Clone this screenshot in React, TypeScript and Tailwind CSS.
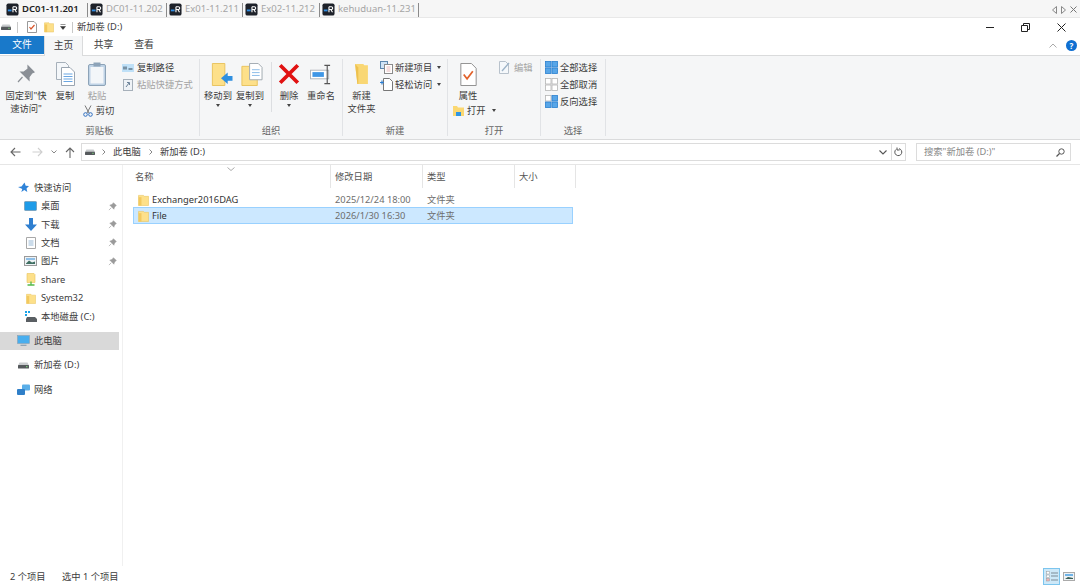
import type { ReactNode } from 'react'

function RdpIcon() {
  return (
    <svg width="13" height="13" viewBox="0 0 14 14">
      <rect x="0.5" y="0.5" width="13" height="13" rx="2" fill="#1d2129" />
      <rect x="2" y="7" width="4" height="2" fill="#2f8be0" />
      <path d="M7.5 4v6M7.5 4h2.5a1.5 1.5 0 0 1 0 3H7.5M9.5 7l1.8 3" stroke="#fff" strokeWidth="1.2" fill="none" />
    </svg>
  )
}

function Drive({ w = 11 }: { w?: number }) {
  return (
    <svg width={w} height={w * 0.6} viewBox="0 0 11 6.6">
      <path d="M1.5 0.5h8L11 3.5H0z" fill="#c9ccce" />
      <rect x="0" y="3" width="11" height="3.6" rx="0.5" fill="#55595c" />
      <rect x="8" y="4.2" width="1.5" height="1" fill="#7fe07f" />
    </svg>
  )
}

function Folder({ w = 12, h = 13 }: { w?: number; h?: number }) {
  return (
    <svg width={w} height={h} viewBox="0 0 12 13">
      <path d="M0.5 1.5h5.5l1 1h4.5v10H0.5z" fill="#fde08a" stroke="#e8c25c" strokeWidth="0.6" />
      <rect x="0.8" y="3.4" width="3" height="9.2" fill="#f3c95f" />
    </svg>
  )
}

function PinSmall() {
  return (
    <svg width="9" height="9" viewBox="0 0 10 10">
      <path d="M6 0.8L9.2 4 8 4.6 6.8 6.6 6.6 8 2 3.4 3.4 3.2 5.4 2zM3.6 6.4L1 9" fill="#9a9a9a" stroke="#9a9a9a" strokeWidth="0.7" />
    </svg>
  )
}

function Caret() {
  return <span className="ml-[3px] inline-block h-0 w-0 border-x-[2.5px] border-t-[3px] border-x-transparent border-t-[#444] align-middle" />
}

function CopyDocs() {
  return (
    <svg width="19" height="24" viewBox="0 0 19 24">
      <path d="M0.500 0.500h9l3 3v14h-12z" fill="#f4f7fa" stroke="#a6b0ba" />
      <path d="M5.500 5.500h8.500l4.500 4.500v13.500h-13z" fill="#fff" stroke="#9aa5b1" />
      <path d="M7.500 12h9M7.500 14.500h9M7.500 17h9M7.500 19.500h9" stroke="#6aa6e2" strokeWidth="1.200" />
    </svg>
  )
}

function Group({ width, label, children }: { width: number; label: string; children: ReactNode }) {
  return (
    <div style={{ width }} className="flex h-[77px] shrink-0 flex-col border-r border-[#e1e3e6]">
      <div className="flex h-[64px] shrink-0">{children}</div>
      <div className="text-center leading-[15px] text-[#666]">{label}</div>
    </div>
  )
}

function Big({ width, icon, lines, muted, caret }: { width: number; icon: ReactNode; lines: string[]; muted?: boolean; caret?: boolean }) {
  return (
    <div style={{ width }} className={`flex shrink-0 flex-col items-center ${muted ? 'text-[#a3a3a3]' : ''}`}>
      <div className="flex h-[30px] items-center justify-center">{icon}</div>
      {lines.map(l => (
        <div key={l} className="h-[13px] whitespace-nowrap leading-[13px]">{l}</div>
      ))}
      {caret && <span className="mt-[2px] h-0 w-0 border-x-[2.5px] border-t-[3px] border-x-transparent border-t-[#444]" />}
    </div>
  )
}

function Small({ icon, text, muted, caret }: { icon: ReactNode; text: string; muted?: boolean; caret?: boolean }) {
  return (
    <div className={`flex h-[17px] items-center gap-[2px] whitespace-nowrap ${muted ? 'text-[#a3a3a3]' : ''}`}>
      <span className="flex w-[14px] shrink-0 justify-center">{icon}</span>
      {text}
      {caret && <Caret />}
    </div>
  )
}

function SelectGrid({ on }: { on: 'all' | 'none' | 'invert' }) {
  const cells = on === 'all' ? [1, 1, 1, 1] : on === 'none' ? [0, 0, 0, 0] : [0, 1, 1, 1]
  return (
    <svg width="13" height="13" viewBox="0 0 13 13">
      {cells.map((c, i) => (
        <rect
          key={i}
          x={i % 2 ? 7 : 0.5}
          y={i > 1 ? 7 : 0.5}
          width="5.5"
          height="5.5"
          fill={c ? '#58a6e8' : '#fff'}
          stroke={c ? '#2a7fcf' : '#b5b5b5'}
          strokeWidth="0.8"
        />
      ))}
    </svg>
  )
}

function NavRow({ icon, text, pin, active, indent = 25 }: { icon: ReactNode; text: string; pin?: boolean; active?: boolean; indent?: number }) {
  return (
    <div className={`flex h-[18.4px] w-[119px] items-center ${active ? 'bg-[#d9d9d9]' : ''}`}>
      <span className="flex w-[15px] shrink-0 justify-center" style={{ marginLeft: indent - 2 }}>{icon}</span>
      <span className="ml-[3px] flex-1 whitespace-nowrap">{text}</span>
      {pin && <span className="mr-[2px] flex"><PinSmall /></span>}
    </div>
  )
}

const tabs = [
  { name: 'DC01-11.201', w: 'w-[84px]', on: true },
  { name: 'DC01-11.202', w: 'w-[79px]' },
  { name: 'Ex01-11.211', w: 'w-[76px]' },
  { name: 'Ex02-11.212', w: 'w-[77px]' },
  { name: 'kehuduan-11.231', w: 'w-[99px]' },
]

const files = [
  { name: 'Exchanger2016DAG', date: '2025/12/24 18:00', selected: false },
  { name: 'File', date: '2026/1/30 16:30', selected: true },
]

export default function App() {
  return (
    <div className="flex h-[586px] w-[1080px] flex-col overflow-hidden bg-white font-['Noto_Sans','Noto_Sans_CJK_SC',sans-serif] text-[9.3px] text-[#3c3c3c]">
      {/* remote desktop tabs */}
      <div className="flex h-[18px] shrink-0 items-center border-b border-[#e8e8e8] bg-[#f6f6f6] pl-[4px] pt-[2px]">
        {tabs.map(t => (
          <div key={t.name} className={`flex h-[14px] items-center border-r border-[#8a8a8a] pl-[2px] ${t.w} ${t.on ? 'font-semibold text-[#222]' : 'text-[#a5a5a5]'}`}>
            <RdpIcon />
            <span className="ml-[3px] whitespace-nowrap text-[9.5px]">{t.name}</span>
          </div>
        ))}
        <div className="ml-auto mr-[3px] flex items-center gap-[4px] text-[#777]">
          <svg width="5" height="8" viewBox="0 0 5 8"><path d="M4.5 0.5v7L0.5 4z" fill="none" stroke="#888" /></svg>
          <svg width="5" height="8" viewBox="0 0 5 8"><path d="M0.5 0.5v7L4.5 4z" fill="none" stroke="#888" /></svg>
          <svg width="7" height="7" viewBox="0 0 7 7"><path d="M0.5 0.5l6 6M6.5 0.5l-6 6" stroke="#777" /></svg>
        </div>
      </div>

      {/* explorer title bar */}
      <div className="flex h-[18px] shrink-0 items-center pl-[1px]">
        <Drive w={10} />
        <span className="ml-[6px] h-[11px] w-px bg-[#c8c8c8]" />
        <svg className="ml-[9px]" width="10" height="12" viewBox="0 0 10 12">
          <path d="M0.5 0.5h6.5l2.5 2.5v8.500h-9z" fill="#fff" stroke="#999" />
          <path d="M2.500 6l1.500 2 3.500-4" fill="none" stroke="#d9562b" strokeWidth="1.200" />
        </svg>
        <span className="ml-[7px] flex"><Folder w={10} h={12} /></span>
        <svg className="ml-[6px]" width="6" height="6" viewBox="0 0 6 6"><path d="M0.500 0.500h5M0.500 2.500h5L3 5.500z" fill="#333" stroke="#333" strokeWidth="0.500" /></svg>
        <span className="ml-[6px] h-[11px] w-px bg-[#c8c8c8]" />
        <span className="ml-[4px] whitespace-nowrap">新加卷 (D:)</span>
        <div className="ml-auto mr-[14px] flex items-center gap-[27px]">
          <svg width="8" height="8" viewBox="0 0 8 8"><path d="M0 4.500h8" stroke="#222" /></svg>
          <svg width="9" height="9" viewBox="0 0 9 9"><path d="M0.500 2.500h6v6h-6zM2.500 2.500v-2h6v6h-2" fill="none" stroke="#222" /></svg>
          <svg width="9" height="9" viewBox="0 0 9 9"><path d="M0.500 0.500l8 8M8.500 0.500l-8 8" stroke="#222" /></svg>
        </div>
      </div>

      {/* ribbon tabs */}
      <div className="flex h-[20px] shrink-0 items-stretch border-b border-[#dadbdc] text-[9.8px]">
        <div className="flex h-[18px] w-[44px] items-center justify-center bg-[#1979ca] text-white">文件</div>
        <div className="-mb-px flex w-[39px] items-center justify-center border-x border-[#dadbdc] bg-[#f5f6f7]">主页</div>
        <div className="flex w-[41px] items-center justify-center">共享</div>
        <div className="flex w-[40px] items-center justify-center">查看</div>
        <div className="ml-auto mr-[3px] flex items-center gap-[9px]">
          <svg width="8" height="5" viewBox="0 0 8 5"><path d="M0.500 4.500L4 1l3.500 3.500" fill="none" stroke="#aaa" /></svg>
          <span className="flex h-[11px] w-[11px] items-center justify-center rounded-full bg-[#0f6fd1] text-[8px] font-bold leading-none text-white">?</span>
        </div>
      </div>

      {/* ribbon */}
      <div className="flex h-[84px] shrink-0 border-b border-[#dadbdc] bg-[#f5f6f7] pt-[3px]">
        <Group width={200} label="剪贴板">
          <Big
            width={52}
            lines={['固定到"快', '速访问"']}
            icon={
              <svg width="20" height="20" viewBox="0 0 20 20">
                <path d="M12 2l6 6-2 1-3 4v3l-8-8 3 0 4-3zM6.500 13L2 18" fill="#8a8f96" stroke="#8a8f96" strokeWidth="1.200" />
              </svg>
            }
          />
          <Big width={26} lines={['复制']} icon={<CopyDocs />} />
          <div className="flex w-[38px] shrink-0 flex-col items-center">
            <div className="flex h-[30px] items-center">
              <svg width="18" height="24" viewBox="0 0 18 24">
                <rect x="0.500" y="2.500" width="17" height="21" rx="1.500" fill="#bfd3e6" stroke="#8da3b8" />
                <rect x="2.500" y="5" width="13" height="16.500" fill="#f3f6f9" />
                <rect x="5.500" y="0.500" width="7" height="4" fill="#8da3b8" />
              </svg>
            </div>
            <div className="h-[13px] leading-[13px] text-[#a3a3a3]">粘贴</div>
            <div className="ml-[3px] mt-[2px] flex items-center gap-[3px] whitespace-nowrap">
              <svg width="10" height="12" viewBox="0 0 10 12">
                <path d="M2 0.500L6 8M8 0.500L4 8" stroke="#777" />
                <circle cx="2.500" cy="9.500" r="1.800" fill="none" stroke="#2f6fc0" />
                <circle cx="7.500" cy="9.500" r="1.800" fill="none" stroke="#2f6fc0" />
              </svg>
              剪切
            </div>
          </div>
          <div className="ml-[5px] flex flex-col whitespace-nowrap">
            <Small
              text="复制路径"
              icon={
                <svg width="12" height="8" viewBox="0 0 12 8">
                  <rect width="12" height="8" fill="#bfe0f7" />
                  <path d="M2 2.500v3M4 2.500v3M6.500 5h4" stroke="#345" />
                </svg>
              }
            />
            <Small
              muted
              text="粘贴快捷方式"
              icon={
                <svg width="10" height="12" viewBox="0 0 10 12">
                  <rect x="0.500" y="0.500" width="9" height="11" fill="#eef2f6" stroke="#a6b0ba" />
                  <path d="M3 8l3-4M4 3.500h2.500V6" fill="none" stroke="#6c8299" />
                </svg>
              }
            />
          </div>
        </Group>

        <Group width={143} label="组织">
          <Big
            width={36}
            lines={['移动到']}
            caret
            icon={
              <svg className="ml-[6px]" width="24" height="23" viewBox="0 0 24 24">
                <path d="M3 0.500h13v23H3z" fill="#fde08a" stroke="#e8c25c" />
                <path d="M12 16l7-6v3.500h5v5h-5V22z" fill="#2f8fe0" />
              </svg>
            }
          />
          <Big
            width={28}
            lines={['复制到']}
            caret
            icon={
              <svg className="ml-[3px]" width="23" height="23" viewBox="0 0 24 24">
                <path d="M2 3.500h16v20H2z" fill="#fde08a" stroke="#e8c25c" />
                <path d="M10 0.500h9l4 4v13H10z" fill="#fff" stroke="#a0a8b0" />
                <path d="M12.500 7h8M12.500 10h8M12.500 13h8" stroke="#8abbe8" />
              </svg>
            }
          />
          <div className="ml-[7px] mt-[3px] h-[50px] w-px bg-[#dcdee1]" />
          <Big
            width={34}
            lines={['删除']}
            caret
            icon={
              <svg width="22" height="22" viewBox="0 0 20 20">
                <path d="M2 2l16 16M18 2L2 18" stroke="#e11212" strokeWidth="3.400" />
              </svg>
            }
          />
          <Big
            width={30}
            lines={['重命名']}
            icon={
              <svg width="23" height="21" viewBox="0 0 24 22">
                <rect x="0.500" y="6.500" width="19" height="9" fill="#fff" stroke="#aeb4ba" />
                <rect x="2.500" y="8.500" width="12" height="5" fill="#3f97e6" />
                <path d="M15 1.500h6M15 20.500h6M18 1.500v19" stroke="#555" strokeWidth="1.200" fill="none" />
              </svg>
            }
          />
        </Group>

        <Group width={105} label="新建">
          <Big
            width={37}
            lines={['新建', '文件夹']}
            icon={
              <svg width="15" height="22" viewBox="0 0 15 24">
                <path d="M0.500 1h9l1 1.500H14.500V23H3z" fill="#f9d774" />
                <path d="M0.500 1L4 5v18H3z" fill="#edc14f" />
              </svg>
            }
          />
          <div className="ml-[-1px] flex flex-col">
            <Small
              text="新建项目"
              caret
              icon={
                <svg width="13" height="13" viewBox="0 0 13 13">
                  <rect x="0.500" y="0.500" width="7" height="7" fill="#cfe3f5" stroke="#5d87ad" />
                  <rect x="4.500" y="3.500" width="8" height="9" fill="#fff" stroke="#8a8a8a" />
                  <path d="M6.500 6h4M6.500 8h4M6.500 10h4" stroke="#e2a7a7" strokeWidth="0.800" />
                </svg>
              }
            />
            <Small
              text="轻松访问"
              caret
              icon={
                <svg width="13" height="13" viewBox="0 0 13 13">
                  <path d="M3.500 0.500h6l3 3v9h-9z" fill="#fff" stroke="#777" />
                  <path d="M0 4.500h4M2 2.500v4" stroke="#2f7fd0" strokeWidth="1.200" />
                </svg>
              }
            />
          </div>
        </Group>

        <Group width={93} label="打开">
          <div className="flex w-[50px] shrink-0 flex-col items-start pl-[5px]">
            <div className="flex h-[30px] w-[30px] items-center justify-center">
              <svg width="17" height="23" viewBox="0 0 17 24">
                <path d="M0.500 0.500h11l5 5v18H0.500z" fill="#fff" stroke="#8d8d8d" />
                <path d="M3.500 12l3.500 4.500 6-8" fill="none" stroke="#e2622b" strokeWidth="1.800" />
              </svg>
            </div>
            <div className="h-[13px] w-[30px] text-center leading-[13px]">属性</div>
            <div className="mt-[2px] flex items-center gap-[3px] whitespace-nowrap">
              <svg width="11" height="11" viewBox="0 0 11 11">
                <path d="M0 1h4l1 1.500h6V11H0z" fill="#fbd872" />
                <path d="M3 11V7h5v4" fill="#2f96e4" />
              </svg>
              打开
              <Caret />
            </div>
          </div>
          <div>
            <Small
              muted
              text="编辑"
              icon={
                <svg width="12" height="13" viewBox="0 0 12 13">
                  <path d="M0.500 0.500h6l3 3v9h-9z" fill="#f5f8fb" stroke="#b8c2cc" />
                  <path d="M3 10l7-8" stroke="#9db3c8" strokeWidth="1.400" />
                </svg>
              }
            />
          </div>
        </Group>

        <Group width={65} label="选择">
          <div className="flex flex-col pl-[3px]">
            <Small text="全部选择" icon={<SelectGrid on="all" />} />
            <Small text="全部取消" icon={<SelectGrid on="none" />} />
            <Small text="反向选择" icon={<SelectGrid on="invert" />} />
          </div>
        </Group>
      </div>

      {/* address row */}
      <div className="flex h-[25px] shrink-0 items-center border-b border-[#e6e6e6]">
        <div className="flex w-[81px] shrink-0 items-center pl-[10px]">
          <svg width="11" height="10" viewBox="0 0 11 10"><path d="M10.500 5H1M5 1L1 5l4 4" fill="none" stroke="#666" strokeWidth="1.100" /></svg>
          <svg className="ml-[11px]" width="11" height="10" viewBox="0 0 11 10"><path d="M0.500 5H10M6 1l4 4-4 4" fill="none" stroke="#cfcfcf" strokeWidth="1.100" /></svg>
          <svg className="ml-[8px]" width="6" height="4" viewBox="0 0 6 4"><path d="M0.500 0.500L3 3l2.500-2.500" fill="none" stroke="#888" /></svg>
          <svg className="ml-[8px]" width="10" height="11" viewBox="0 0 10 11"><path d="M5 11V1M1 5l4-4 4 4" fill="none" stroke="#666" strokeWidth="1.100" /></svg>
        </div>
        <div className="flex h-[18px] w-[825px] shrink-0 items-center border border-[#dcdcdc] pl-[3px]">
          <Drive w={10} />
          <svg className="ml-[7px]" width="4" height="6" viewBox="0 0 4 6"><path d="M0.500 0.500L3 3 0.500 5.500" fill="none" stroke="#888" /></svg>
          <span className="ml-[7px] whitespace-nowrap">此电脑</span>
          <svg className="ml-[8px]" width="4" height="6" viewBox="0 0 4 6"><path d="M0.500 0.500L3 3 0.500 5.500" fill="none" stroke="#888" /></svg>
          <span className="ml-[7px] whitespace-nowrap">新加卷 (D:)</span>
          <div className="ml-auto flex h-full items-center">
            <svg className="mr-[4px]" width="8" height="5" viewBox="0 0 8 5"><path d="M0.500 0.500L4 4l3.500-3.500" fill="none" stroke="#555" strokeWidth="1.100" /></svg>
            <div className="flex h-full w-[14px] items-center justify-center border-l border-[#dcdcdc]">
              <svg width="9" height="10" viewBox="0 0 9 10"><path d="M2 2.500a3.500 3.500 0 1 0 3-0.800M3 0.500v2.500h2.500" fill="none" stroke="#555" /></svg>
            </div>
          </div>
        </div>
        <div className="ml-[10px] flex h-[18px] w-[155px] shrink-0 items-center justify-between border border-[#dcdcdc] pl-[7px] pr-[5px] text-[#888]">
          <span className="whitespace-nowrap">搜索"新加卷 (D:)"</span>
          <svg width="9" height="9" viewBox="0 0 9 9"><circle cx="5.500" cy="3.500" r="2.700" fill="none" stroke="#555" /><path d="M3.500 5.500L0.500 8.500" stroke="#555" strokeWidth="1.300" /></svg>
        </div>
      </div>

      {/* body */}
      <div className="flex min-h-0 flex-1">
        <div className="flex w-[123px] shrink-0 flex-col border-r border-[#f0f0f0] pt-[13.6px]">
          <NavRow
            indent={18}
            text="快速访问"
            icon={
              <svg width="11" height="11" viewBox="0 0 11 11">
                <path d="M6.500 0.500l1.200 3.300 3.300 0.300-2.500 2.300 0.800 3.600-3-1.900-3 1.900 1-3L0 5l3.500-0.500z" fill="#2f83d8" />
              </svg>
            }
          />
          <NavRow
            text="桌面"
            pin
            icon={
              <svg width="13" height="10" viewBox="0 0 13 10">
                <rect x="0.500" y="0.500" width="12" height="9" rx="0.800" fill="#1e9be8" stroke="#6b8ba5" strokeWidth="0.600" />
              </svg>
            }
          />
          <NavRow
            text="下载"
            pin
            icon={
              <svg width="12" height="13" viewBox="0 0 12 13">
                <path d="M4 0h4v6.500h4L6 13 0 6.500h4z" fill="#2f7fd0" />
              </svg>
            }
          />
          <NavRow
            text="文档"
            pin
            icon={
              <svg width="10" height="12" viewBox="0 0 10 12">
                <path d="M0.500 0.500h9v11h-9z" fill="#fff" stroke="#a8a8a8" />
                <path d="M2.500 4h5M2.500 6h5M2.500 8h5" stroke="#7fa7cc" strokeWidth="0.800" />
              </svg>
            }
          />
          <NavRow
            text="图片"
            pin
            icon={
              <svg width="13" height="10" viewBox="0 0 13 10">
                <rect x="0.500" y="0.500" width="12" height="9" fill="#eef2f5" stroke="#9a9a9a" />
                <path d="M2 7.500l3-3 3 2 3-1v2.500H2z" fill="#3f6f62" />
                <rect x="2" y="2" width="9" height="2" fill="#8ebfe8" />
              </svg>
            }
          />
          <NavRow
            text="share"
            icon={
              <svg width="10" height="13" viewBox="0 0 10 13">
                <path d="M1 0.500h7l1 1v8H1z" fill="#fde08a" stroke="#e8c25c" strokeWidth="0.600" />
                <path d="M5 8.500v3M1.500 12h7" stroke="#55b94a" strokeWidth="1.300" />
              </svg>
            }
          />
          <NavRow text="System32" icon={<Folder w={10} h={13} />} />
          <NavRow
            text="本地磁盘 (C:)"
            icon={
              <svg width="12" height="11" viewBox="0 0 12 11">
                <rect x="0" y="0" width="2" height="2" fill="#19a3e8" />
                <rect x="3" y="0" width="2" height="2" fill="#19a3e8" />
                <rect x="0" y="3" width="2" height="2" fill="#19a3e8" />
                <path d="M2 6h8l2 2v3H1V8z" fill="#5a5f63" />
              </svg>
            }
          />
          <div className="mt-[6px]">
            <NavRow
              active
              indent={18}
              text="此电脑"
              icon={
                <svg width="13" height="11" viewBox="0 0 13 11">
                  <rect x="0.500" y="0.500" width="12" height="8" fill="#48aeee" stroke="#8aa0b2" strokeWidth="0.600" />
                  <path d="M3.500 10.300h6" stroke="#8aa0b2" strokeWidth="1.200" />
                </svg>
              }
            />
          </div>
          <div className="mt-[6px]">
            <NavRow indent={18} text="新加卷 (D:)" icon={<Drive w={11} />} />
          </div>
          <div className="mt-[6px]">
            <NavRow
              indent={18}
              text="网络"
              icon={
                <svg width="13" height="12" viewBox="0 0 13 12">
                  <rect x="5" y="0.500" width="8" height="6" rx="1" fill="#5aaee8" />
                  <rect x="0" y="5" width="8" height="6" rx="1" fill="#2f7fc8" />
                </svg>
              }
            />
          </div>
        </div>

        <div className="relative flex min-w-0 flex-1 flex-col pl-[10px]">
          <svg className="absolute left-[104px] top-[2px]" width="8" height="4" viewBox="0 0 8 4"><path d="M0.500 0.500L4 3.500l3.500-3" fill="none" stroke="#aaa" /></svg>
          <div className="flex h-[23px] w-[443px] text-[#555]">
            <div className="flex w-[198px] items-center border-r border-[#e5e5e5] pl-[2px]">名称</div>
            <div className="flex w-[92px] items-center border-r border-[#e5e5e5] pl-[4px]">修改日期</div>
            <div className="flex w-[92px] items-center border-r border-[#e5e5e5] pl-[4px]">类型</div>
            <div className="flex w-[61px] items-center border-r border-[#e5e5e5] pl-[4px]">大小</div>
          </div>
          <div className="mt-[4px] flex flex-col">
            {files.map(f => (
              <div key={f.name} className={`flex w-[440px] items-center border pl-[4px] ${f.selected ? 'h-[17px] border-[#99d1ff] bg-[#cce8ff]' : 'h-[15px] border-transparent'}`}>
                <Folder w={11} h={12} />
                <span className="ml-[3px] w-[183px] text-[#333]">{f.name}</span>
                <span className="w-[92px] whitespace-nowrap text-[#6d6d6d]">{f.date}</span>
                <span className="text-[#6d6d6d]">文件夹</span>
              </div>
            ))}
          </div>
        </div>
      </div>

      {/* status bar */}
      <div className="flex h-[20px] shrink-0 items-center pl-[10px] pr-[5px] pt-[1px]">
        <span className="w-[52px] whitespace-nowrap">2 个项目</span>
        <span className="whitespace-nowrap">选中 1 个项目</span>
        <div className="ml-auto flex items-center gap-[3px]">
          <div className="flex h-[17px] w-[17px] items-center justify-center border border-[#7cc5ee] bg-[#cde8f8]">
            <svg width="12" height="11" viewBox="0 0 12 11">
              <rect x="0.500" y="0.500" width="3" height="2.500" fill="#fff" stroke="#999" strokeWidth="0.500" />
              <rect x="0.500" y="4" width="3" height="2.500" fill="#fff" stroke="#999" strokeWidth="0.500" />
              <rect x="0.500" y="7.500" width="3" height="2.500" fill="#f3b3b3" stroke="#999" strokeWidth="0.500" />
              <path d="M5 2h7M5 5h7M5 9h7" stroke="#7d8b96" />
            </svg>
          </div>
          <svg width="12" height="9" viewBox="0 0 12 9">
            <rect x="0.500" y="0.500" width="11" height="8" fill="#eef2f5" stroke="#aaa" />
            <rect x="2" y="2" width="8" height="2" fill="#6fb4e8" />
            <path d="M2 7l3-2 5 1v1z" fill="#3a5f56" />
          </svg>
        </div>
      </div>
    </div>
  )
}
